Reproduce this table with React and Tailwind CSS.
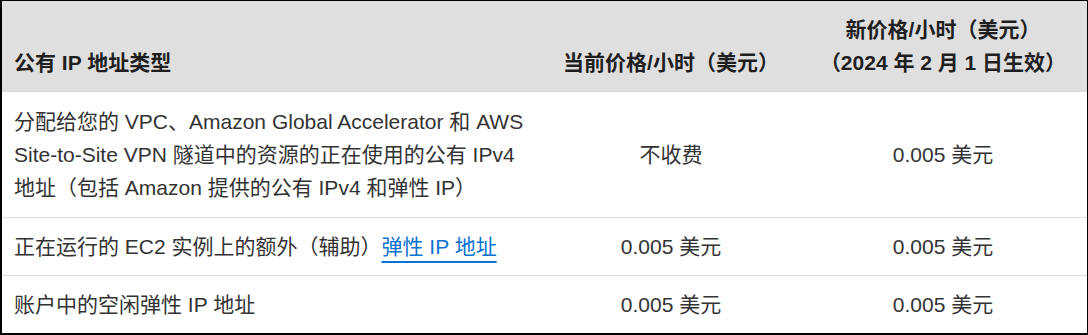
const font = { fontFamily: '"Liberation Sans", Arial, "Noto Sans CJK SC", sans-serif' }

const rows = [
  {
    label: '分配给您的 VPC、Amazon Global Accelerator 和 AWS Site-to-Site VPN 隧道中的资源的正在使用的公有 IPv4 地址（包括 Amazon 提供的公有 IPv4 和弹性 IP）',
    current: '不收费',
    next: '0.005 美元',
    pad: 'py-[13px]',
  },
  {
    label: (
      <>
        正在运行的 EC2 实例上的额外（辅助）
        <a href="#" className="text-[#0972d3] underline decoration-2 underline-offset-[7px]">弹性 IP 地址</a>
      </>
    ),
    current: '0.005 美元',
    next: '0.005 美元',
    pad: 'py-3',
  },
  {
    label: '账户中的空闲弹性 IP 地址',
    current: '0.005 美元',
    next: '0.005 美元',
    pad: 'py-3',
  },
]

export default function App() {
  return (
    <div className="w-[1088px] h-[335px] bg-white" style={font}>
      <div className="border-l-2 border-t border-r border-b-2 border-black h-full overflow-hidden">
        <table className="w-full table-fixed border-collapse text-[21px] leading-[33px] text-[#333]">
          <colgroup>
            <col className="w-[541px]" />
            <col className="w-[256px]" />
            <col />
          </colgroup>
          <thead>
            <tr className="bg-[#dfdfdf] border-b border-[#dadada] text-[#1f1f1f]">
              <th className="px-3 py-3 text-left align-bottom font-bold">公有 IP 地址类型</th>
              <th className="px-2 py-3 text-center align-bottom font-bold whitespace-nowrap">当前价格/小时（美元）</th>
              <th className="px-2 py-3 text-center align-bottom font-bold">
                新价格/小时（美元）
                <br />
                （2024 年 2 月 1 日生效）
              </th>
            </tr>
          </thead>
          <tbody>
            {rows.map((r, i) => (
              <tr key={i} className={i < rows.length - 1 ? 'border-b border-[#dddddd]' : ''}>
                <td className={`px-3 ${r.pad} align-middle`}>{r.label}</td>
                <td className={`px-3 ${r.pad} text-center align-middle`}>{r.current}</td>
                <td className={`px-3 ${r.pad} text-center align-middle`}>{r.next}</td>
              </tr>
            ))}
          </tbody>
        </table>
      </div>
    </div>
  )
}
